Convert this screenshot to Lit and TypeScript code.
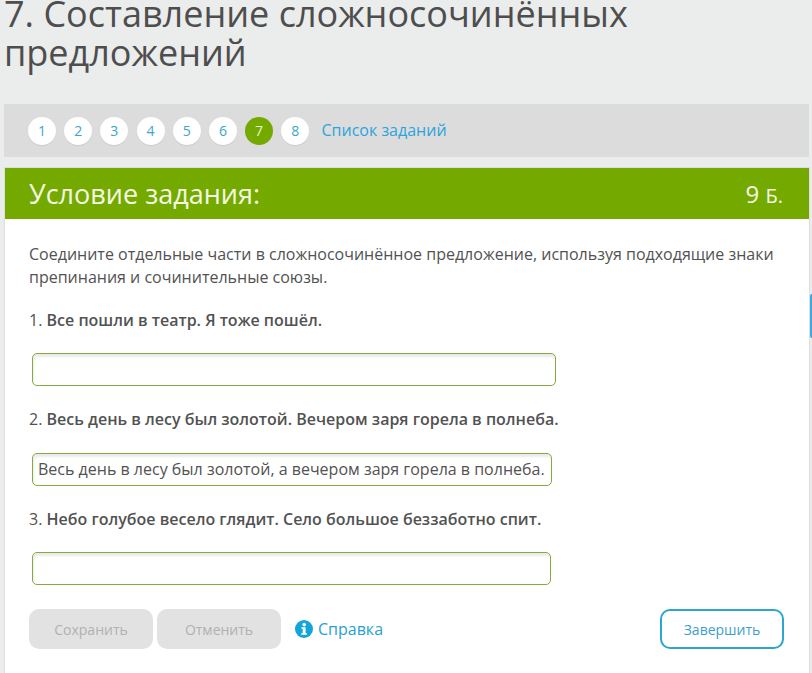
import { LitElement, html, css } from "lit";
import { customElement } from "lit/decorators.js";

const steps = [1, 2, 3, 4, 5, 6, 7, 8];

@customElement("app-root")
export class AppRoot extends LitElement {
  static styles = css`
    :host {
      display: block;
      position: relative;
      width: 812px;
      height: 673px;
      overflow: hidden;
      background: #ebecec;
      font-family: "Open Sans", "Noto Sans", sans-serif;
      color: #525252;
      box-sizing: border-box;
    }
    h1 {
      margin: -6px 0 0 4px;
      height: 110px;
      width: 720px;
      font-size: 36px;
      line-height: 39px;
      font-weight: 400;
      color: #4e4e4e;
    }
    .nav {
      margin: 0 3px 0 4px;
      height: 53px;
      background: #dcdcdc;
      display: flex;
      align-items: center;
      padding-left: 24px;
      box-sizing: border-box;
    }
    .step {
      width: 28px;
      height: 28px;
      border-radius: 50%;
      background: #fff;
      margin-right: 8.2px;
      display: flex;
      align-items: center;
      justify-content: center;
      font-size: 14px;
      color: #3aa5cf;
      box-shadow: 0 1px 1px rgba(0, 0, 0, 0.08);
    }
    .step.on {
      background: #74aa00;
      color: #e8f2cf;
      box-shadow: none;
    }
    .list {
      margin: -2px 0 0 4px;
      font-size: 16px;
      color: #29a5dc;
    }
    .card {
      margin: 11px 3px 0 5px;
      height: 520px;
      background: #fff;
      box-shadow: 0 0 0 1px #dedede;
    }
    .head {
      height: 51px;
      background: #74aa00;
      color: #f4f9e4;
      display: flex;
      align-items: center;
      justify-content: space-between;
      padding: 0 26px 0 24px;
    }
    .head .t {
      font-size: 27px;
    }
    .head .p {
      font-size: 24px;
    }
    .head .p small {
      font-size: 20px;
    }
    .body {
      padding: 24px 24px 0 24px;
      font-size: 16px;
      line-height: 23px;
    }
    p {
      margin: 0;
    }
    .intro {
      width: 760px;
      line-height: 22.5px;
      margin-bottom: 21px;
    }
    b {
      font-weight: 600;
    }
    .field {
      display: block;
      margin: 21px 0 21px 3px;
      height: 33px;
      border: 1px solid #86ab3c;
      border-radius: 5px;
      box-sizing: border-box;
      background: #fff;
      box-shadow: inset 1px 3px 2px rgba(0, 0, 0, 0.08);
      padding: 0 5px;
      line-height: 31px;
      color: #525252;
      white-space: nowrap;
    }
    .w1 {
      width: 524px;
      margin-bottom: 22px;
    }
    .w2 {
      width: 520px;
      margin-top: 22px;
      margin-bottom: 22px;
    }
    .w3 {
      width: 519px;
      margin-top: 21px;
      margin-bottom: 24px;
    }
    .actions {
      display: flex;
      align-items: center;
    }
    .btn {
      width: 124px;
      height: 40px;
      border-radius: 10px;
      background: #e2e2e2;
      color: #b1b1b1;
      font-size: 14px;
      display: flex;
      align-items: center;
      justify-content: center;
      margin-right: 4px;
    }
    .help {
      display: flex;
      align-items: center;
      gap: 5px;
      margin-left: 10px;
      color: #29a0cf;
      font-size: 16px;
    }
    .help svg {
      display: block;
    }
    .finish {
      margin-left: auto;
      margin-right: 1px;
      width: 124px;
      height: 40px;
      box-sizing: border-box;
      border: 2px solid #2ba6cf;
      border-radius: 10px;
      color: #3aa0cf;
      font-size: 14px;
      display: flex;
      align-items: center;
      justify-content: center;
    }
    .tab {
      position: absolute;
      left: 810px;
      top: 294px;
      width: 2px;
      height: 44px;
      background: #3fa9dc;
      border-radius: 2px 0 0 2px;
    }
  `;

  render() {
    return html`
      <h1>7. Составление сложносочинённых предложений</h1>
      <div class="nav">
        ${steps.map(
          (n) => html`<div class="step ${n === 7 ? "on" : ""}">${n}</div>`
        )}
        <div class="list">Список заданий</div>
      </div>
      <div class="card">
        <div class="head">
          <div class="t">Условие задания:</div>
          <div class="p">9 <small>Б.</small></div>
        </div>
        <div class="body">
          <p class="intro">
            Соедините отдельные части в сложносочинённое предложение, используя
            подходящие знаки препинания и сочинительные союзы.
          </p>
          <p>1. <b>Все пошли в театр. Я тоже пошёл.</b></p>
          <div class="field w1"></div>
          <p>2. <b>Весь день в лесу был золотой. Вечером заря горела в полнеба.</b></p>
          <div class="field w2">Весь день в лесу был золотой, а вечером заря горела в полнеба.</div>
          <p>3. <b>Небо голубое весело глядит. Село большое беззаботно спит.</b></p>
          <div class="field w3"></div>
          <div class="actions">
            <div class="btn">Сохранить</div>
            <div class="btn">Отменить</div>
            <div class="help">
              <svg width="18" height="18" viewBox="0 0 18 18">
                <circle cx="9" cy="9" r="9" fill="#12a5dc"></circle>
                <circle cx="9.2" cy="4.6" r="1.8" fill="#fff"></circle>
                <path d="M6.4 7.3h4.2v6h1.3v1.5H6.2v-1.5h1.5V8.8H6.4z" fill="#fff"></path>
              </svg>
              <span>Справка</span>
            </div>
            <div class="finish">Завершить</div>
          </div>
        </div>
      </div>
      <div class="tab"></div>
    `;
  }
}
